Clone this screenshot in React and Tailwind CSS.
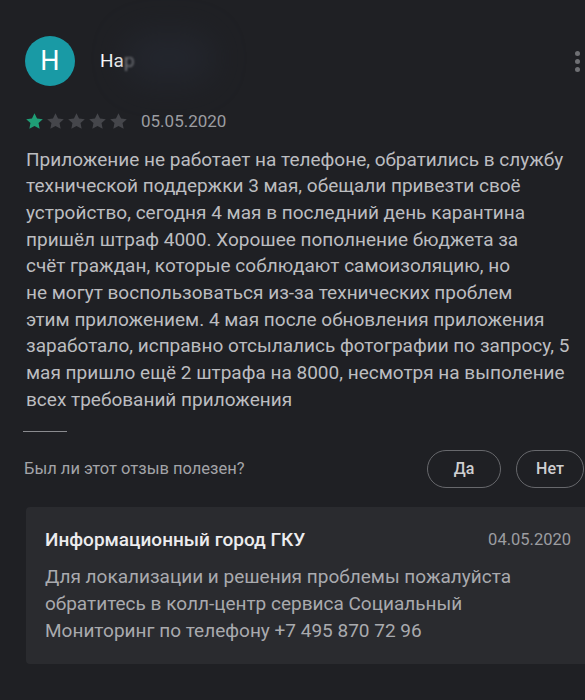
import React from "react";

const reviewLines = [
  "Приложение не работает на телефоне, обратились в службу",
  "технической поддержки 3 мая, обещали привезти своё",
  "устройство, сегодня 4 мая в последний день карантина",
  "пришёл штраф 4000. Хорошее пополнение бюджета за",
  "счёт граждан, которые соблюдают самоизоляцию, но",
  "не могут воспользоваться из-за технических проблем",
  "этим приложением. 4 мая после обновления приложения",
  "заработало, исправно отсылались фотографии по запросу, 5",
  "мая пришло ещё 2 штрафа на 8000, несмотря на выполение",
  "всех требований приложения",
];

const replyLines = [
  "Для локализации и решения проблемы пожалуйста",
  "обратитесь в колл-центр сервиса Социальный",
  "Мониторинг по телефону +7 495 870 72 96",
];

function Star({ filled }) {
  return (
    <svg width="19" height="19" viewBox="0 0 24 24">
      <path
        d="M12 1.5l3.2 6.6 7.3.9-5.4 5 1.4 7.2L12 17.6l-6.5 3.6 1.4-7.2-5.4-5 7.3-.9z"
        fill={filled ? "#1f9e76" : "#45464b"}
      />
    </svg>
  );
}

function PillButton({ label, width }) {
  return (
    <button
      className={`${width} h-[38px] rounded-full border-[1.5px] border-[#67686c] text-[16px] font-medium text-[#cfcfd1] flex items-center justify-center`}
    >
      {label}
    </button>
  );
}

export default function App() {
  return (
    <div className="w-[585px] h-[700px] overflow-hidden bg-[#1f2024] font-['Roboto',sans-serif]">
      {/* Header */}
      <div className="relative flex items-center pt-[36px] pl-[25px] pr-[5px]">
        <div className="w-[50px] h-[50px] rounded-full bg-[#199aa5] flex items-center justify-center text-[27px] text-white">
          H
        </div>
        <div className="relative ml-[25px] text-[19px] text-white">
          На<span className="text-[#8d8e92] blur-[1px]">р</span>
          <div className="absolute left-[24px] top-[-14px] w-[90px] h-[50px] rounded-full bg-[#262a34] blur-lg opacity-60" />
        </div>
        <div className="ml-auto flex flex-col gap-[3px]">
          <span className="w-[5px] h-[5px] rounded-full bg-[#6f7074]" />
          <span className="w-[5px] h-[5px] rounded-full bg-[#6f7074]" />
          <span className="w-[5px] h-[5px] rounded-full bg-[#6f7074]" />
        </div>
      </div>

      {/* Rating */}
      <div className="flex items-center mt-[23px] pl-[25px]">
        <div className="flex gap-[2px]">
          <Star filled />
          <Star />
          <Star />
          <Star />
          <Star />
        </div>
        <span className="ml-[13px] text-[17px] text-[#9c9da1]">05.05.2020</span>
      </div>

      {/* Review text */}
      <div className="mt-[12px] pl-[26px] text-[19px] leading-[26.7px] text-[#bcbdc0]">
        {reviewLines.map((line, i) => (
          <div key={i} className="whitespace-nowrap">
            {line}
          </div>
        ))}
      </div>

      <div className="mt-[17px] ml-[23px] w-[44px] h-[1.5px] bg-[#8a8b8f]" />

      {/* Helpful */}
      <div className="flex items-center mt-[18px] pl-[24px]">
        <span className="text-[16.5px] text-[#a3a4a8]">Был ли этот отзыв полезен?</span>
        <div className="ml-auto flex gap-[15px] mr-[1px]">
          <PillButton label="Да" width="w-[74px]" />
          <PillButton label="Нет" width="w-[68px]" />
        </div>
      </div>

      {/* Developer reply */}
      <div className="mt-[19px] ml-[26px] rounded-l-[4px] bg-[#2a2b2f] pl-[19px] pr-[14px] pt-[20px] pb-[20px]">
        <div className="flex items-center justify-between leading-[26px]">
          <span className="text-[19px] font-medium text-[#ececee]">Информационный город ГКУ</span>
          <span className="text-[16.5px] text-[#9c9da1]">04.05.2020</span>
        </div>
        <div className="mt-[10px] text-[19px] leading-[27px] text-[#a9aaae]">
          {replyLines.map((line, i) => (
            <div key={i} className="whitespace-nowrap">
              {line}
            </div>
          ))}
        </div>
      </div>
    </div>
  );
}
